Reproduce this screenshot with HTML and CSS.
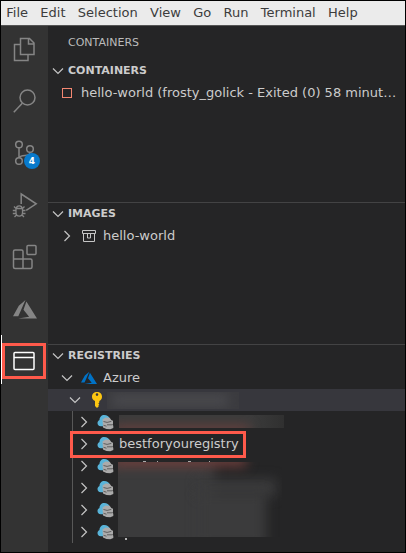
FILE: index.html
```
<!DOCTYPE html>
<html lang="en">
<head>
<meta charset="utf-8">
<title>Containers</title>
<link rel="stylesheet" href="styles.css">
</head>
<body>
<svg class="defs" aria-hidden="true">
  <symbol id="down" viewBox="0 0 12 12"><path d="M1 3.5 6 8.5 11 3.5" fill="none" stroke="#c5c5c5" stroke-width="1.2"/></symbol>
  <symbol id="right" viewBox="0 0 12 12"><path d="M3.5 1 8.5 6 3.5 11" fill="none" stroke="#c5c5c5" stroke-width="1.2"/></symbol>
  <symbol id="azure" viewBox="0 0 24 19"><path d="M12.5 0 5.8 5.8 0 16.3h5.3zM13.4 1.5 10.5 9.7l5.6 7L5.2 18.6H24z"/></symbol>
  <symbol id="registry" viewBox="0 0 17 16">
    <path d="M3.8 12.3C1.600 12.2.5 10.9.5 9.100c0-1.600.9-2.700 2-3.200C2.500 3 4.500.9 7.200.9c2.800 0 4.800 1.300 5.400 3.300L6 12.300z" fill="#59b4d9"/>
    <path d="M5.500 5.400 8.500 3.400l4.200.4 1.600 2.200 1.700.8v3l-.6 1 .9 1v2.200l-3 1.300-3.800-.3-3.500-1.500z" fill="#ababab"/>
    <path d="M6.500 7.500l3.600.9 4.200-1M10 10.800h5M6.500 11.300l3 .9" fill="none" stroke="#4a4a4a" stroke-width=".8"/>
  </symbol>
</svg>
<div class="window">
  <nav class="menu"><span>File</span><span>Edit</span><span>Selection</span><span>View</span><span>Go</span><span>Run</span><span>Terminal</span><span>Help</span></nav>
  <div class="workbench">
    <aside class="activity">
      <div class="item"><svg width="26" height="26" viewBox="0 0 26 26"><path d="M8.500 1.500h9l4.500 4.500v11.500h-13.500zM16.500 1.500v5.500h5.500M8.500 7.500h-6v16h13.500v-6"/></svg></div>
      <div class="item"><svg width="26" height="26" viewBox="0 0 26 26"><circle cx="15.500" cy="9.500" r="7.500"/><path d="M10.300 15.200 1.800 24.300"/></svg></div>
      <div class="item"><svg width="26" height="26" viewBox="0 0 26 26"><circle cx="7" cy="4.500" r="3.300"/><circle cx="7" cy="21" r="3.300"/><circle cx="18" cy="9" r="3.300"/><path d="M7 8v9.700M18 12.300c-.3 3-2 3.200-5 3.200-3.500 0-5 .5-6 2.500"/></svg><span class="badge">4</span></div>
      <div class="item"><svg width="26" height="26" viewBox="0 0 26 26"><path d="M9.200 12V2l15 9.800-10 6.500"/><path d="M4 16.500h6.500v4c0 2.300-1.200 3.700-3.300 3.700S4 22.800 4 20.500zM4.500 16.500c0-3.500 5.500-3.500 5.500 0M4 18.500H.8M13.500 18.500h-3M4 21.500H.8M13.500 21.500h-3M4 16.500l-2-2M10.500 16.500l2-2M4.500 23l-2 2M10 23l2 2" stroke-width="1.300"/></svg></div>
      <div class="item"><svg width="26" height="26" viewBox="0 0 26 26"><rect x="15" y="1.500" width="9" height="9" rx="1"/><path d="M1.500 7.500q0-1.500 1.500-1.500h6.500q1.500 0 1.500 1.500v7.500h7.500q1.500 0 1.500 1.500v6.500q0 1.500-1.500 1.500H3q-1.500 0-1.500-1.500zM1.500 15H11v9.500"/></svg></div>
      <div class="item"><svg class="azure-gray" width="24" height="19"><use href="#azure"/></svg></div>
      <div class="item active"><svg width="22" height="20" viewBox="0 0 22 20"><rect x="1" y="1.500" width="20" height="17" rx="1"/><path d="M1 6.500h20"/></svg><span class="highlight"></span></div>
    </aside>
    <main class="sidebar">
      <h1>CONTAINERS</h1>
      <section class="containers">
        <h2><svg class="arrow"><use href="#down"/></svg>CONTAINERS</h2>
        <div class="row container"><span class="stopped"></span><span>hello-world (frosty_golick - Exited (0) 58 minut…</span></div>
      </section>
      <section class="images">
        <h2><svg class="arrow"><use href="#down"/></svg>IMAGES</h2>
        <div class="row level1"><svg class="arrow"><use href="#right"/></svg><svg class="icon" viewBox="0 0 16 16"><path d="M1.500 2.500h13v3h-13zM2.500 5.500h11v8h-11zM6.500 6v4h3V6" fill="none" stroke="#c5c5c5"/></svg>hello-world</div>
      </section>
      <section class="registries">
        <h2><svg class="arrow"><use href="#down"/></svg>REGISTRIES</h2>
        <div class="row level1"><svg class="arrow"><use href="#down"/></svg><svg class="icon azure-blue"><use href="#azure"/></svg>Azure</div>
        <div class="row level2 selected"><svg class="arrow"><use href="#down"/></svg><svg class="icon" viewBox="0 0 16 16"><path fill-rule="evenodd" d="M8 0c3 0 5 2 5 4.800 0 2-1 3.500-2.700 4.300v1.500l-1 .8 1 1-1 .9.700.8L8 16l-2-2V9.100C4 8.200 3 6.800 3 4.800 3 2 5 0 8 0zm0 1.300a1.300 1.300 0 1 0 0 2.600 1.300 1.300 0 0 0 0-2.600z" fill="#fcc612"/></svg><span class="redacted subscription"><i></i></span></div>
        <div class="tree">
          <div class="row"><svg class="arrow"><use href="#right"/></svg><svg class="icon reg"><use href="#registry"/></svg><span class="redacted first"><i></i></span></div>
          <div class="row"><svg class="arrow"><use href="#right"/></svg><svg class="icon reg"><use href="#registry"/></svg>bestforyouregistry<span class="highlight"></span></div>
          <div class="row"><svg class="arrow"><use href="#right"/></svg><svg class="icon reg"><use href="#registry"/></svg><span class="marks"><b></b><b></b><b></b><b></b></span><span class="redacted group"><i class="g1"></i><i class="g2"></i><i class="g3"></i><i class="glow"></i></span></div>
          <div class="row"><svg class="arrow"><use href="#right"/></svg><svg class="icon reg"><use href="#registry"/></svg></div>
          <div class="row"><svg class="arrow"><use href="#right"/></svg><svg class="icon reg"><use href="#registry"/></svg></div>
          <div class="row"><svg class="arrow"><use href="#right"/></svg><svg class="icon reg"><use href="#registry"/></svg><span class="tail"></span></div>
        </div>
      </section>
    </main>
  </div>
</div>
</body>
</html>
```
FILE: styles.css
```
* { box-sizing: border-box; }
body { margin: 0; background: #000; }
.defs { position: absolute; width: 0; height: 0; }
.window {
  width: 406px; height: 553px; border: 1px solid #000;
  display: flex; flex-direction: column; overflow: hidden;
  font: 13px/22px "DejaVu Sans", sans-serif; color: #ccc;
}
.menu {
  height: 25px; flex: none; display: flex; padding-left: 5.3px; gap: 12.3px;
  background: #ebebeb; color: #3c3c3c; line-height: 24px; border-bottom: 1px solid #555;
}
.workbench { flex: 1; display: flex; min-height: 0; }
.activity { width: 47px; flex: none; background: #333; }
.item { position: relative; height: 52px; display: flex; align-items: center; justify-content: center; }
.item:first-child { height: 49px; padding-bottom: 2px; }
.item svg { fill: none; stroke: #858585; stroke-width: 1.5; }
.item .azure-gray { fill: #858585; stroke: none; }
.item.active { border-left: 1px solid #fff; height: 49px; padding: 3px 2px 0 0; }
.item.active svg { stroke: #fff; }
.badge {
  position: absolute; left: 23px; top: 26px; width: 16px; height: 16px; border-radius: 50%;
  background: #087acc; color: #fff; font: bold 9px/16px "DejaVu Sans", sans-serif; text-align: center;
}
.highlight { position: absolute; border: 3px solid #ff5a4b; }
.active .highlight { left: 0; top: 8px; width: 44px; height: 36px; }
.sidebar { flex: 1; min-width: 0; background: #252526; }
h1 { margin: 0; height: 34px; padding-left: 20px; font: 11px/33px "DejaVu Sans", sans-serif; color: #bbb; }
h2 { margin: 0; height: 22px; display: flex; align-items: center; gap: 4px; padding-left: 4px; font: bold 11px/22px "DejaVu Sans", sans-serif; }
.arrow { width: 12px; height: 12px; flex: none; }
.containers { height: 142px; }
.images { height: 142px; border-top: 1px solid #434344; }
.registries { border-top: 1px solid #434344; }
.row { position: relative; height: 22px; display: flex; align-items: center; white-space: nowrap; }
.container { padding-left: 14px; gap: 9px; }
.stopped { width: 10px; height: 10px; border: 1px solid #f48771; flex: none; }
.icon { width: 16px; height: 16px; margin: 0 6px 0 8px; flex: none; }
.level1 { padding-left: 13px; }
.level2 { padding-left: 21px; }
.azure-blue { fill: #0072c6; }
.selected { background: #37373d; }
.tree { margin-left: 24px; border-left: 1px solid #585858; }
.tree .row { padding-left: 5px; }
.reg { width: 17px; margin: 0 5px 0 7px; }
.redacted { position: absolute; overflow: hidden; }
.redacted i { position: absolute; filter: blur(6px); }
.subscription { left: 59px; top: 3px; width: 132px; height: 17px; background: #3b3b3f; }
.subscription i { left: 5px; top: 3px; width: 116px; height: 11px; background: #4b4b4f; }
.first { left: 46px; top: 4px; width: 165px; height: 13px; background: linear-gradient(90deg, #3b3b3b 80%, #303030); }
.first i { left: -5px; top: 11px; width: 135px; height: 10px; background: #6b403d; }
.tree .highlight { left: -3px; top: -2px; width: 176px; height: 27px; }
.group { left: 45px; top: 7px; width: 164px; height: 75px; }
.group .g1 { left: -10px; top: -5px; width: 107px; height: 95px; background: #3b3b3c; }
.group .g2 { left: 80px; top: 17px; width: 78px; height: 17px; background: #3b3b3c; }
.group .g3 { left: 80px; top: 30px; width: 68px; height: 55px; background: #3b3b3c; }
.group .glow { left: -5px; top: -7px; width: 133px; height: 11px; background: #74413e; }
.marks b { position: absolute; top: 6px; left: 70px; width: 3px; height: 1px; background: #aaa; }
.marks b + b { left: 84px; width: 1px; }
.marks b:nth-child(3) { left: 115px; width: 3px; }
.marks b:nth-child(4) { left: 136px; width: 1px; }
.tail { position: absolute; left: 52px; top: 17px; width: 2px; height: 2px; background: #b5b5b5; }
```
